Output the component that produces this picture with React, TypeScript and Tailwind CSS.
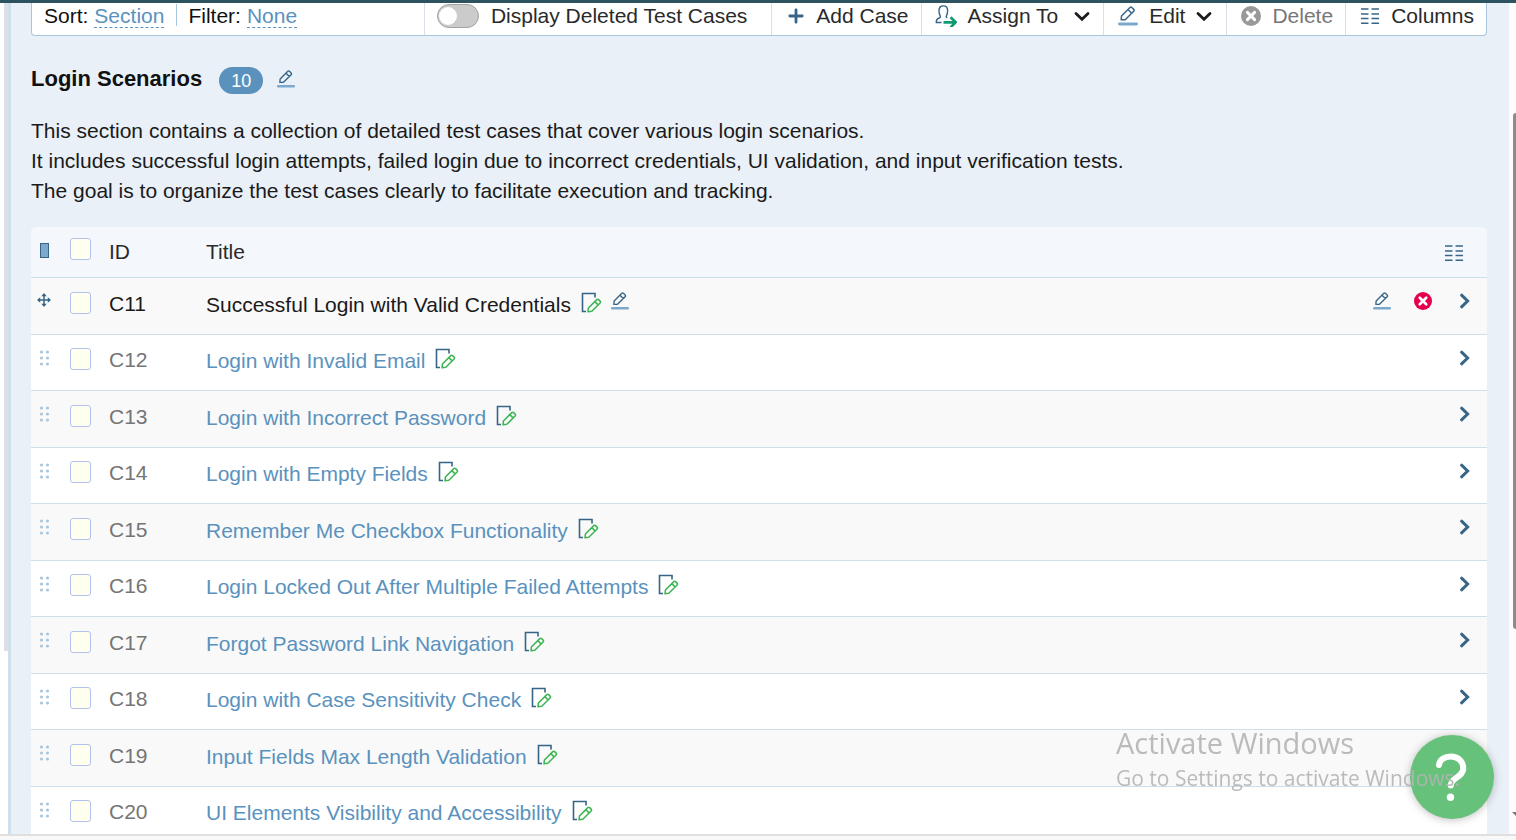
import type { ReactNode } from "react";

type TestCase = { id: string; title: string };

const cases: TestCase[] = [
  { id: "C11", title: "Successful Login with Valid Credentials" },
  { id: "C12", title: "Login with Invalid Email" },
  { id: "C13", title: "Login with Incorrect Password" },
  { id: "C14", title: "Login with Empty Fields" },
  { id: "C15", title: "Remember Me Checkbox Functionality" },
  { id: "C16", title: "Login Locked Out After Multiple Failed Attempts" },
  { id: "C17", title: "Forgot Password Link Navigation" },
  { id: "C18", title: "Login with Case Sensitivity Check" },
  { id: "C19", title: "Input Fields Max Length Validation" },
  { id: "C20", title: "UI Elements Visibility and Accessibility" },
];

function PencilIcon({ className }: { className: string }) {
  return (
    <svg viewBox="0 0 20 20" className={className} fill="none" aria-hidden="true">
      <path
        d="M3.200 13.800 3.500 10 12 1.500a1.300 1.300 0 0 1 1.800 0l1.900 1.900a1.300 1.300 0 0 1 0 1.800L7.200 13.700ZM10 3.500l3.700 3.700"
        stroke="#376587"
        strokeWidth="1.500"
        strokeLinejoin="round"
      />
      <path d="M1.400 18h17.200" stroke="#7ba9cd" strokeWidth="2.800" strokeLinecap="round" />
    </svg>
  );
}

function NoteEditIcon() {
  return (
    <svg viewBox="0 0 21 21" className="h-[21px] w-[21px] shrink-0" fill="none" aria-hidden="true">
      <path d="M5 19.500H1.500V1.500h12.500v4" stroke="#376587" strokeWidth="1.600" />
      <path
        d="M7 19.800 7.400 16 15.800 7.600a1.300 1.300 0 0 1 1.800 0l1.500 1.500a1.300 1.300 0 0 1 0 1.800L10.800 19.300ZM13.800 9.600l3.300 3.300"
        stroke="#3cb552"
        strokeWidth="1.500"
        strokeLinejoin="round"
      />
    </svg>
  );
}

function ColumnsIcon() {
  return (
    <svg viewBox="0 0 18 18" className="h-[18px] w-[18px] shrink-0" aria-hidden="true">
      <path d="M0 2h7.500M10.500 2H18M0 7h7.500M10.500 7H18M0 11.500h7.500M10.500 11.500H18M0 16.200h7.500M10.500 16.200H18" stroke="#376587" strokeWidth="1.600" />
    </svg>
  );
}

function ChevronDownIcon() {
  return (
    <svg viewBox="0 0 16 16" className="h-4 w-4 shrink-0" fill="none" aria-hidden="true">
      <path d="M2 5.500 8 11.200 14 5.500" stroke="#1c1c1c" strokeWidth="2.800" strokeLinecap="round" />
    </svg>
  );
}

function ChevronRightIcon() {
  return (
    <svg viewBox="0 0 12 16" className="h-4 w-3" fill="none" aria-hidden="true">
      <path d="M2.600 2.200 8.600 8 2.600 13.800" stroke="#376587" strokeWidth="3" strokeLinecap="round" />
    </svg>
  );
}

function CrossCircleIcon({ className }: { className: string }) {
  return (
    <svg viewBox="0 0 20 20" className={className} aria-hidden="true">
      <circle cx="10" cy="10" r="10" fill="currentColor" />
      <path d="m6.400 6.400 7.200 7.200m0-7.200-7.200 7.200" stroke="#fff" strokeWidth="3" strokeLinecap="round" />
    </svg>
  );
}

function AssignIcon() {
  return (
    <svg viewBox="0 0 22 22" className="h-[22px] w-[22px] shrink-0" fill="none" aria-hidden="true">
      <path
        d="M6.500 17.500H1.300c-.3-2.700 1-3.800 3-4.500 1.200-.4 1.400-1.300.8-2.300C4.200 9.200 4 7.600 4 5.600 4 2.800 5.700.900 8.300.900s4.300 1.900 4.300 4.700c0 2-.2 3.600-1.100 5.100-.5 1-.2 1.800.7 2.200"
        stroke="#376587"
        strokeWidth="1.400"
      />
      <path d="M8.500 17.300h11.500M15.600 12.200l5 5.100-5 5.100" stroke="#109b74" strokeWidth="2.700" />
    </svg>
  );
}

function PlusIcon() {
  return (
    <svg viewBox="0 0 16 16" className="h-4 w-4 shrink-0" aria-hidden="true">
      <path d="M8 1.800v12.400M1.800 8h12.400" stroke="#376587" strokeWidth="2.800" strokeLinecap="round" />
    </svg>
  );
}

function MoveIcon() {
  return (
    <svg viewBox="0 0 14 14" className="-ml-0.5 h-[14px] w-[14px]" aria-hidden="true">
      <path d="M7 2v10M2 7h10" stroke="#376587" strokeWidth="1.500" />
      <path d="m7 0 2.700 3.200H4.300zM7 14l2.700-3.200H4.300zM0 7l3.200-2.700v5.400zM14 7l-3.200-2.700v5.400z" fill="#376587" />
    </svg>
  );
}

function GripIcon() {
  return (
    <svg viewBox="0 0 12 16" className="h-4 w-3" fill="#a9c6dc" aria-hidden="true">
      <circle cx="2.500" cy="2" r="1.600" />
      <circle cx="8.500" cy="2" r="1.600" />
      <circle cx="2.500" cy="8" r="1.600" />
      <circle cx="8.500" cy="8" r="1.600" />
      <circle cx="2.500" cy="14" r="1.600" />
      <circle cx="8.500" cy="14" r="1.600" />
    </svg>
  );
}

function Tick({ label }: { label: string }) {
  return (
    <input
      type="checkbox"
      aria-label={label}
      className="block h-[22px] w-[21px] appearance-none rounded-[3px] border border-[#b4c0ee] bg-[#fffff0] checked:bg-[#5a92bd]"
    />
  );
}

function ToolButton({ className, children }: { className: string; children: ReactNode }) {
  return (
    <button type="button" className={`flex items-center border-l border-[#dbe0e8] pb-[7px] whitespace-nowrap ${className}`}>
      {children}
    </button>
  );
}

function Toolbar() {
  return (
    <div className="flex h-[33px] rounded-b border border-t-0 border-[#a9c5dc] bg-white text-[#2a2a2a]">
      <div className="flex flex-1 items-start whitespace-nowrap pl-3 text-[#111]">
        <span className="leading-[26px]">Sort:</span>
        <a href="#sort" className="ml-[6px] h-[25px] border-b border-dashed border-[#5a92bd] leading-[26px] text-[#5a92bd]">
          Section
        </a>
        <span className="mr-[11px] ml-3 mt-px h-[22px] w-px bg-[#a9c5dc]" />
        <span className="leading-[26px]">Filter:</span>
        <a href="#filter" className="ml-[6px] h-[25px] border-b border-dashed border-[#5a92bd] leading-[26px] text-[#5a92bd]">
          None
        </a>
      </div>
      <label className="flex items-center border-l border-[#dbe0e8] pr-6 pb-[7px] pl-3 whitespace-nowrap">
        <input
          type="checkbox"
          role="switch"
          className="mr-3 flex h-6 w-[42px] appearance-none items-center rounded-full border border-[#a3a3a3] bg-[#cbcbcb] pl-px before:h-[18px] before:w-[18px] before:rounded-full before:bg-white checked:justify-end"
        />
        Display Deleted Test Cases
      </label>
      <ToolButton className="gap-3 pr-3 pl-4">
        <PlusIcon />
        Add Case
      </ToolButton>
      <ToolButton className="pr-[13px] pl-[13px]">
        <AssignIcon />
        <span className="mr-4 ml-[11px]">Assign To</span>
        <ChevronDownIcon />
      </ToolButton>
      <ToolButton className="gap-[11px] pr-[14px] pl-[14px]">
        <PencilIcon className="h-5 w-5 shrink-0" />
        Edit
        <ChevronDownIcon />
      </ToolButton>
      <ToolButton className="gap-[11px] pr-3 pl-[14px] text-[#777]">
        <CrossCircleIcon className="h-5 w-5 shrink-0 text-[#999]" />
        Delete
      </ToolButton>
      <ToolButton className="gap-3 pr-3 pl-[15px]">
        <ColumnsIcon />
        Columns
      </ToolButton>
    </div>
  );
}

function CaseRow({ item, active }: { item: TestCase; active: boolean }) {
  return (
    <tr className="group h-14 border-b border-[#cddfeb] bg-white align-top odd:h-[57px] odd:bg-[#f9f9f9]">
      <td className="pt-[15px] pl-2">{active ? <MoveIcon /> : <GripIcon />}</td>
      <td className="pt-[13px] group-odd:pt-[14px]">
        <Tick label={`Select ${item.id}`} />
      </td>
      <td className={`pt-3 group-odd:pt-[13px] ${active ? "text-[#1a1a1a]" : "text-[#757575]"}`}>{item.id}</td>
      <td className="pt-[13px] group-odd:pt-[14px]">
        <div className="flex items-start">
          <a href={`#${item.id}`} className={`whitespace-nowrap ${active ? "text-[#1a1a1a]" : "text-[#5a92bd]"}`}>
            {item.title}
          </a>
          <button type="button" aria-label={`Open ${item.id}`} className="ml-[10px]">
            <NoteEditIcon />
          </button>
          {active && (
            <button type="button" aria-label="Rename test case" className="ml-[9px]">
              <PencilIcon className="h-[18px] w-[18px]" />
            </button>
          )}
        </div>
      </td>
      <td className="pt-[14px] pr-[16px]">
        <div className="flex items-start justify-end">
          {active && (
            <>
              <button type="button" aria-label="Edit test case" className="mr-[23px]">
                <PencilIcon className="h-[18px] w-[18px]" />
              </button>
              <button type="button" aria-label="Delete test case" className="mr-[27px]">
                <CrossCircleIcon className="h-[18px] w-[18px] text-[#e4004b]" />
              </button>
            </>
          )}
          <button type="button" aria-label={`Expand ${item.id}`} className="pt-px">
            <ChevronRightIcon />
          </button>
        </div>
      </td>
    </tr>
  );
}

export default function App() {
  return (
    <div className="flex h-screen flex-col overflow-hidden bg-white font-['Liberation_Sans',Arial,sans-serif] text-[21px] leading-[26px] text-[#1a1a1a]">
      <div className="h-[3px] shrink-0 bg-[#2d5360]" />
      <div className="flex min-h-0 flex-1">
        <div className="w-2 shrink-0 pl-1">
          <div className="h-[648px] bg-[#dcdfe6]" />
        </div>
        <main className="min-w-0 flex-1 overflow-hidden border-l-[3px] border-[#cddfeb] bg-[#e9f0f7] pr-[22px] pl-5">
          <Toolbar />
          <header className="mt-[27px] flex items-center">
            <h1 className="text-[22px] font-bold text-[#111]">Login Scenarios</h1>
            <span className="mt-1 ml-[17px] flex h-[27px] w-11 items-center justify-center rounded-full bg-[#5a92bd] text-lg text-white">10</span>
            <button type="button" aria-label="Edit section" className="ml-[14px]">
              <PencilIcon className="h-[18px] w-[18px]" />
            </button>
          </header>
          <p className="mt-[22px] leading-[30px]">
            This section contains a collection of detailed test cases that cover various login scenarios.
            <br />
            It includes successful login attempts, failed login due to incorrect credentials, UI validation, and input verification tests.
            <br />
            The goal is to organize the test cases clearly to facilitate execution and tracking.
          </p>
          <div className="mt-[21px] overflow-hidden rounded-t-[5px]">
            <table className="w-full table-fixed border-collapse text-left">
              <colgroup>
                <col className="w-[39px]" />
                <col className="w-[39px]" />
                <col className="w-[97px]" />
                <col />
                <col className="w-[140px]" />
              </colgroup>
              <thead>
                <tr className="h-[50px] border-b border-[#cddfeb] bg-[#f4f8fd] align-top text-[#2a2a2a]">
                  <td className="pt-4 pl-[9px]">
                    <div className="h-[15px] w-[9px] border border-[#376587] bg-[#7ba9cd]" />
                  </td>
                  <td className="pt-[11px]">
                    <Tick label="Select all" />
                  </td>
                  <th className="pt-3 font-normal">ID</th>
                  <th className="pt-3 font-normal">Title</th>
                  <td className="pt-[17px] pr-6">
                    <button type="button" aria-label="Choose columns" className="ml-auto block">
                      <ColumnsIcon />
                    </button>
                  </td>
                </tr>
              </thead>
              <tbody>
                {cases.map((item, index) => (
                  <CaseRow key={item.id} item={item} active={index === 0} />
                ))}
              </tbody>
            </table>
          </div>
        </main>
        <div className="flex w-[7px] shrink-0 flex-col items-end overflow-hidden bg-[#fcfcfc]">
          <div className="mt-[110px] h-[516px] w-[3px] shrink-0 rounded-l-full bg-[#8b8b8b]" />
          <svg viewBox="0 0 4 5" className="mt-[183px] h-[5px] w-1" aria-hidden="true">
            <path d="M0 0h4v4z" fill="#777" />
          </svg>
        </div>
      </div>
      <div className="h-[6px] shrink-0 border-t-2 border-[#dfdfdf] bg-[#f8f8f8]" />

      <button type="button" aria-label="Help" className="fixed right-[22px] bottom-[21px] h-[84px] w-[84px] rounded-full bg-[#66c17b] shadow-[0_1px_8px_rgba(0,0,0,0.25)]">
        <svg viewBox="0 0 84 84" fill="none" aria-hidden="true">
          <path d="M29 30C29.500 24.800 34.500 21.500 40.800 21.500c7.400 0 12.500 5 12.500 11.700 0 9.300-12.500 9-12.500 17.300" stroke="#fff" strokeWidth="6" strokeLinecap="round" />
          <circle cx="40.500" cy="62.300" r="3.700" fill="#fff" />
        </svg>
      </button>
      <div className="pointer-events-none fixed right-[61px] bottom-[46px] w-[339px] font-['Open_Sans','Noto_Sans',sans-serif] whitespace-nowrap text-[#b4b4b4]/90">
        <div className="text-[29px] leading-[38px]">Activate Windows</div>
        <div className="text-[21px] leading-[32px]">Go to Settings to activate Windows.</div>
      </div>
    </div>
  );
}
